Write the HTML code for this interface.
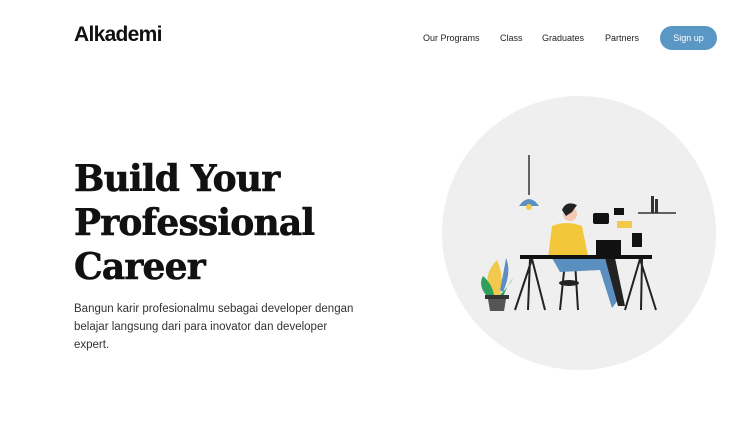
<!DOCTYPE html>
<html><head><style>
*{margin:0;padding:0;box-sizing:border-box}
body{width:750px;height:422px;background:#fff;position:relative;overflow:hidden;font-family:"Liberation Sans",sans-serif;color:#111}
.logo{position:absolute;left:74px;top:23px;font-size:21px;font-weight:bold;letter-spacing:-0.7px}
.nav{position:absolute;top:33px;font-size:9px;color:#222}
.btn{position:absolute;left:660px;top:26px;width:57px;height:24px;border-radius:12px;background:#5a97c4;color:#fff;font-size:9px;text-align:center;line-height:25px}
h1{position:absolute;left:74px;top:157px;font-family:"DejaVu Serif","Liberation Serif",serif;font-weight:bold;font-size:36px;line-height:44px;letter-spacing:-0.8px;-webkit-text-stroke:0.6px #111}
p{position:absolute;left:74px;top:300px;width:282px;font-size:11.5px;line-height:18px;color:#333}
svg{position:absolute;left:0;top:0}
</style></head><body>
<div class="logo">Alkademi</div>
<div class="nav" style="left:423px">Our Programs</div>
<div class="nav" style="left:500px">Class</div>
<div class="nav" style="left:542px">Graduates</div>
<div class="nav" style="left:605px">Partners</div>
<div class="btn">Sign up</div>
<h1>Build Your<br>Professional<br>Career</h1>
<p>Bangun karir profesionalmu sebagai developer dengan belajar langsung dari para inovator dan developer expert.</p>
<svg width="750" height="422">
<circle cx="579" cy="233" r="137" fill="#efefef"/>
<line x1="529" y1="155" x2="529" y2="195" stroke="#333" stroke-width="1.5"/>
<path d="M519 206 Q529 192 539 206 Z" fill="#5a8fc0"/>
<circle cx="529" cy="207" r="3" fill="#f2c94c"/>
<line x1="638" y1="213" x2="676" y2="213" stroke="#333" stroke-width="1.5"/>
<rect x="651" y="196" width="3" height="17" fill="#333"/><rect x="655" y="199" width="3" height="14" fill="#333"/>
<path d="M565 262 L560 310 M575 262 L578 310" stroke="#222" stroke-width="2"/>
<ellipse cx="569" cy="283" rx="10" ry="3" fill="#222"/>
<path d="M552 226 Q566 220 582 226 L588 256 L548 258 Z" fill="#f2c83a"/>
<circle cx="570" cy="214" r="7" fill="#f4c7b0"/>
<path d="M562 210 Q566 200 577 205 L572 212 L566 216 Z" fill="#222"/>
<path d="M552 258 L600 256 Q612 258 618 300 L612 308 L600 270 L560 272 Z" fill="#5a8fc0"/>
<path d="M605 258 L615 258 L625 306 L618 306 Z" fill="#222"/>
<rect x="596" y="240" width="25" height="16" fill="#111"/>
<rect x="520" y="255" width="132" height="4" fill="#111"/>
<path d="M532 259 L515 310 M532 259 L545 310 M530 259 L528 310" stroke="#222" stroke-width="2"/>
<path d="M640 259 L625 310 M640 259 L656 310 M642 259 L641 310" stroke="#222" stroke-width="2"/>
<rect x="593" y="213" width="16" height="11" rx="2" fill="#111"/>
<rect x="614" y="208" width="10" height="7" fill="#111"/>
<rect x="617" y="221" width="15" height="7" fill="#f2c94c"/>
<rect x="632" y="233" width="10" height="14" fill="#111"/>
<path d="M490 295 Q482 275 497 260 Q505 278 500 295 Z" fill="#f2c94c"/>
<path d="M486 295 Q478 285 483 276 Q492 284 494 295 Z" fill="#2f9e5a"/>
<path d="M500 295 Q510 285 513 278 Q505 290 504 295 Z" fill="#2f9e5a"/>
<path d="M500 290 Q505 265 506 258 Q512 272 503 292 Z" fill="#5a8fc0"/>
<rect x="485" y="295" width="24" height="4" fill="#333"/>
<path d="M488 299 L506 299 L504 311 L490 311 Z" fill="#555"/>
</svg>
</body></html>
